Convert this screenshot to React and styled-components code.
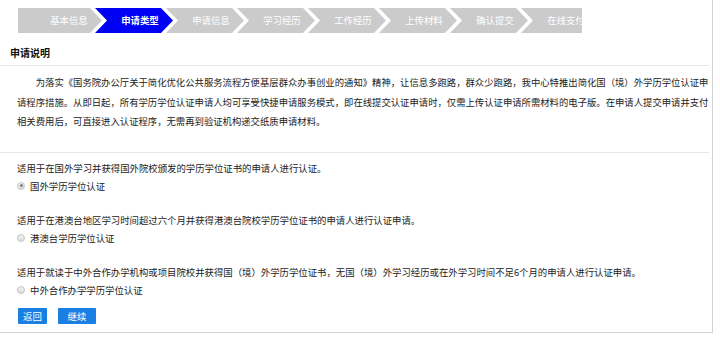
import React from 'react'
import styled, { createGlobalStyle } from 'styled-components'

const GlobalStyle = createGlobalStyle`
  body {
    margin: 0;
    background: #ffffff;
    font-family: "Noto Sans CJK SC", "Noto Sans", sans-serif;
    color: #222222;
  }
`

const Panel = styled.div`
  width: 713px;
  height: 333px;
  box-sizing: border-box;
  border-right: 1px solid #d2d2d2;
  border-bottom: 1px solid #d2d2d2;
  padding-top: 8px;
  background: #fff;
`

const StepBar = styled.div`
  display: flex;
  width: 564px;
  height: 25px;
  margin-left: 18px;
  overflow: hidden;
`

const Step = styled.div`
  flex: 0 0 auto;
  box-sizing: border-box;
  width: ${p => (p.$first ? '84px' : '78px')};
  margin-left: ${p => (p.$first ? '0' : '-7px')};
  padding-left: ${p => (p.$first ? '18px' : '12px')};
  height: 25px;
  line-height: 25px;
  text-align: center;
  font-size: 9.4px;
  font-weight: ${p => (p.$active ? 700 : 400)};
  color: #ffffff;
  white-space: nowrap;
  background: ${p => (p.$active ? '#0000f5' : '#cbcbcb')};
  clip-path: ${p =>
    p.$first
      ? 'polygon(0 0, 72px 0, 84px 50%, 72px 100%, 0 100%)'
      : 'polygon(0 0, 66px 0, 78px 50%, 66px 100%, 0 100%, 12px 50%)'};
`

const Heading = styled.h2`
  margin: 12px 3px 0 0;
  padding: 0 0 4px 10px;
  height: 16px;
  line-height: 16px;
  font-size: 10px;
  font-weight: 700;
  color: #111;
  border-bottom: 1px solid #e6e6e6;
`

const Intro = styled.div`
  margin-right: 3px;
  padding: 7px 0 20px 17px;
  border-bottom: 1px solid #e6e6e6;
`

const IntroText = styled.p`
  width: 696px;
  margin: 0;
  font-size: 9.35px;
  line-height: 19.5px;
  text-indent: 2em;
  color: #222;
`

const Options = styled.div`
  display: flex;
  flex-direction: column;
  gap: 16px;
  padding: 6px 0 0 17px;
`

const Group = styled.div`
  display: flex;
  flex-direction: column;
`

const Desc = styled.div`
  height: 18px;
  line-height: 18px;
  font-size: 9.4px;
  color: #222;
  white-space: nowrap;
`

const RadioRow = styled.label`
  display: flex;
  align-items: center;
  gap: 5px;
  height: 18px;
  font-size: 9.4px;
  color: #222;
`

const RadioDot = styled.span`
  position: relative;
  width: 8px;
  height: 8px;
  box-sizing: border-box;
  border-radius: 50%;
  border: 1px solid #c4c4c4;
  background: linear-gradient(#f4f4f4, #dcdcdc);

  &::after {
    content: '';
    position: absolute;
    left: 1.5px;
    top: 1.5px;
    width: 3px;
    height: 3px;
    border-radius: 50%;
    background: ${p => (p.$checked ? '#7a7a7a' : 'transparent')};
  }
`

const Buttons = styled.div`
  display: flex;
  gap: 11px;
  margin: 9px 0 0 18px;
`

const Button = styled.button`
  height: 16px;
  width: ${p => p.$w}px;
  padding: 0;
  border: none;
  border-radius: 1px;
  background: #1a7fe2;
  color: #fff;
  font-family: "Noto Sans CJK SC", "Noto Sans", sans-serif;
  font-size: 9.4px;
  line-height: 16px;
`

const steps = ['基本信息', '申请类型', '申请信息', '学习经历', '工作经历', '上传材料', '确认提交', '在线支付']

const options = [
  {
    desc: '适用于在国外学习并获得国外院校颁发的学历学位证书的申请人进行认证。',
    label: '国外学历学位认证',
    checked: true,
  },
  {
    desc: '适用于在港澳台地区学习时间超过六个月并获得港澳台院校学历学位证书的申请人进行认证申请。',
    label: '港澳台学历学位认证',
  },
  {
    desc: '适用于就读于中外合作办学机构或项目院校并获得国（境）外学历学位证书，无国（境）外学习经历或在外学习时间不足6个月的申请人进行认证申请。',
    label: '中外合作办学学历学位认证',
  },
]

const App = () => {
  return (
    <>
      <GlobalStyle />
      <Panel>
        <StepBar>
          {steps.map((s, i) => (
            <Step key={s} $first={i === 0} $active={i === 1}>{s}</Step>
          ))}
        </StepBar>

        <Heading>申请说明</Heading>
        <Intro>
          <IntroText>
            为落实《国务院办公厅关于简化优化公共服务流程方便基层群众办事创业的通知》精神，让信息多跑路，群众少跑路，我中心特推出简化国（境）外学历学位认证申请程序措施。从即日起，所有学历学位认证申请人均可享受快捷申请服务模式，即在线提交认证申请时，仅需上传认证申请所需材料的电子版。在申请人提交申请并支付相关费用后，可直接进入认证程序，无需再到验证机构递交纸质申请材料。
          </IntroText>
        </Intro>

        <Options>
          {options.map(o => (
            <Group key={o.label}>
              <Desc>{o.desc}</Desc>
              <RadioRow>
                <RadioDot $checked={o.checked} />
                {o.label}
              </RadioRow>
            </Group>
          ))}
        </Options>

        <Buttons>
          <Button $w={29}>返回</Button>
          <Button $w={38}>继续</Button>
        </Buttons>
      </Panel>
    </>
  )
}

export default App
